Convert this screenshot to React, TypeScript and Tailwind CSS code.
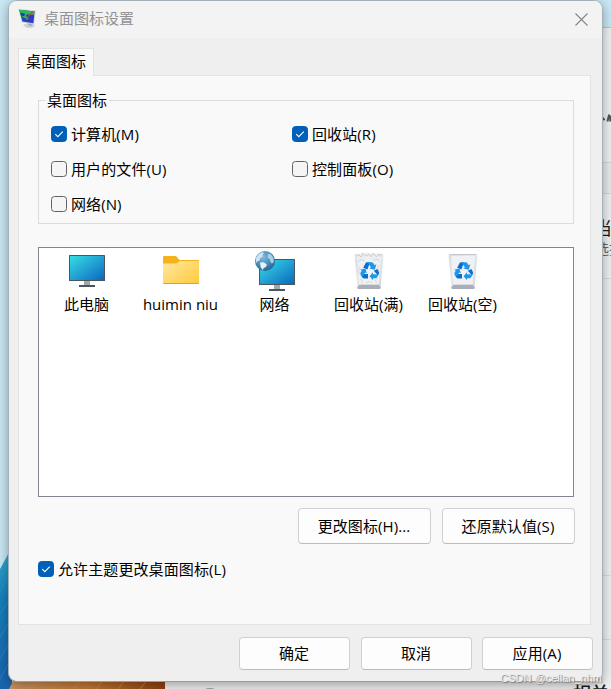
import { useState } from "react";
import type { ReactNode } from "react";

function Monitor({ x, y, fill }: { x: number; y: number; fill: string }) {
    return (
        <g transform={`translate(${x} ${y})`}>
            <rect x="15" y="26" width="6" height="4" fill="#a0a8ae" />
            <rect x="10" y="30" width="16" height="2" fill="#4a545c" />
            <rect width="36" height="26" rx="0.6" fill="#4b565e" />
            <rect x="1" y="1" width="34" height="24" fill={fill} />
        </g>
    );
}

function ScreenGradient({ id }: { id: string }) {
    return (
        <linearGradient id={id} x1="0" y1="0" x2="1" y2="1">
            <stop offset="0" stopColor="#35dde2" />
            <stop offset="0.5" stopColor="#22a2d4" />
            <stop offset="1" stopColor="#0b68bd" />
        </linearGradient>
    );
}

function ComputerIcon() {
    return (
        <svg width="48" height="48" viewBox="0 0 48 48">
            <defs><ScreenGradient id="pc" /></defs>
            <Monitor x={6} y={6} fill="url(#pc)" />
        </svg>
    );
}

function FolderIcon() {
    return (
        <svg width="48" height="48" viewBox="0 0 48 48">
            <defs>
                <linearGradient id="folder" x1="0" y1="0" x2="1" y2="1">
                    <stop offset="0" stopColor="#ffe8a0" />
                    <stop offset="1" stopColor="#ffca3a" />
                </linearGradient>
            </defs>
            <path d="M6 8.2Q6 7 7.2 7H18q1.2 0 2 1l2.4 3H41q1 0 1 1v10H6Z" fill="#f7b11b" />
            <path d="M6 14.5h12.5q1.5 0 2.5-1l1.5-1.4H41q1 0 1 1V34q0 1-1 1H7q-1 0-1-1Z" fill="url(#folder)" />
            <path d="M6 33.6q0 1.4 1 1.4h34q1 0 1-1.4q-.3.5-1 .5H7q-.7 0-1-.5Z" fill="#e5a11b" />
        </svg>
    );
}

function NetworkIcon() {
    return (
        <svg width="48" height="48" viewBox="0 0 48 48">
            <defs>
                <ScreenGradient id="net" />
                <radialGradient id="globe" cx="0.4" cy="0.3" r="0.75">
                    <stop offset="0" stopColor="#7ebce0" />
                    <stop offset="0.6" stopColor="#4489b8" />
                    <stop offset="1" stopColor="#255f8c" />
                </radialGradient>
            </defs>
            <Monitor x={8} y={10} fill="url(#net)" />
            <circle cx="14" cy="12" r="10" fill="url(#globe)" />
            <path d="M5 9q1.6-4 6-5.8l2 .8-1.5 2 .5 1.4-2.4 1.4-1 2.6-2.1 1L5 14Z" fill="#cfe3ee" />
            <path d="M9 13.6l3.4-.4 3.4 2-.8 2.6-2.4 1.2-.6 2-2.2-2.2Z" fill="#e9f3f7" />
            <path d="M17 4.6l3 1 2.4 3.5.4 3.6-1.8 2-1.6-2-.5-2.4-2.3-1.5Z" fill="#a9cfe3" />
        </svg>
    );
}

function BinIcon({ full = false }: { full?: boolean }) {
    const id = full ? "bin-full" : "bin-empty";
    return (
        <svg width="48" height="48" viewBox="0 0 48 48">
            <defs>
                <linearGradient id={id} x1="0" y1="0" x2="1" y2="1">
                    <stop offset="0" stopColor="#d6dbe1" />
                    <stop offset="0.4" stopColor="#e6e9ed" />
                    <stop offset="1" stopColor="#d3d8de" />
                </linearGradient>
            </defs>
            <path d="M9.6 6.4Q9.6 5 11 5h26q1.4 0 1.4 1.4L35.6 39q-.1 1-1.2 1H13.6q-1.1 0-1.2-1Z" fill={`url(#${id})`} />
            <path d="M11 5.5h26" stroke="#c3c8cf" strokeWidth="1" />
            <path d="M12 7h24l-2.4 28.6H14.4Z" fill="#eff1f4" />
            <path d="M14.4 35.8h19.2l2 2.4-.1 1q-.1.8-1.1.8H13.6q-1 0-1.1-.8l-.1-1Z" fill="#a9aeb7" />
            {full && (
                <>
                    <path d="M10 8l1.6-3.4 3.2.8 2-2.4 3 1.6 3-1 2.2 1.4L28.6 3l1.6 2 3.2-1.4 1.2 2L38 7l-2 4H12Z" fill="#eceeef" />
                    <path d="M11 7.5l2.6-1.8L16 8l2-3.4 3 2.4 3.2-2 1.6 2.6 3-3 2.4 3 3-2 1.8 2" stroke="#bfc4c8" strokeWidth="0.8" fill="none" />
                    <path d="M13 13l3-2.4 4 1.4M28 11.4l4-1 2.6 2.4" stroke="#cdd2d6" strokeWidth="0.9" fill="none" />
                    <path d="M13 17l2.4 2-2 3 1.6 3M34.4 16l-2.2 3 1.8 3M15 30l2.6 1.6-1 3M32.8 29l-2.4 2 1 3M21 33.6l3-1.2 3 1.8" stroke="#d2d6da" strokeWidth="0.9" fill="none" />
                </>
            )}
            <g>
                <path d="M18.2 18.8l2.2-4.4q.6-1.2 1.8-1.2H25l-2.6 7.2Z" fill="#0c6fd0" />
                <path d="M22.4 13.2h4.4q1 0 1.6 1l1.2 2 1.8-.9-1.6 5.5-5.6-1.2 1.8-1.2Z" fill="#1c97ea" />
                <path d="M28.8 21.8l3.6-1.9 1.4 2.9q.6 1.2 0 2.2l-.8 1.6Z" fill="#0c6fd0" />
                <path d="M33.6 25.4l-1.4 2.6q-.6 1.2-1.8 1.2H28v2l-3.4-4 3.4-4v2Z" fill="#1c97ea" />
                <path d="M23 29.6h-3.8q-1.2 0-1.8-1l-1.4-2.4.8-1.2H23Z" fill="#0c6fd0" />
                <path d="M16.2 27q-1.4-2-.6-3.4l1.2-1.8-1.6-1 5.2-1.4 1.4 5.2-1.6-1-2 3.4Z" fill="#1c97ea" />
            </g>
        </svg>
    );
}

function TitleIcon() {
    return (
        <svg width="20" height="22" viewBox="0 0 20 22" className="-mt-px shrink-0">
            <path d="M5 17q3-2 8-1.6l3.8 1.4q.4 2.6-3.8 3.2-5 .6-8-3Z" fill="#d0d3d5" />
            <path d="M9 14.6l5 .6.4 3-3.6-.2Z" fill="#abb0b4" />
            <path d="M.2 .8L17.8 2.4l-1.6 13.8L3.8 14.4Z" fill="#d3d7d9" />
            <path d="M1.2 1.8l15.4 1.6-1.2 11.8L4.4 13.4Z" fill="#2e3cc8" />
            <path d="M1.2 1.8l15.4 1.6-.6 3-5 .6-1.4 3-3 .2L2.6 7.4Z" fill="#2cbd48" />
            <path d="M2.2 4.4l4.8 1.4-.6 2.4-3.2-.4ZM8 7l3.6-1 .8 2-3 2Z" fill="#2236cc" />
            <path d="M15.4 3.2L10 8.6" stroke="#d8442c" strokeWidth="1.2" />
            <path d="M10.2 9.8l-2 1.8" stroke="#35b84a" strokeWidth="1.4" />
        </svg>
    );
}

function Checkbox({ label, initial = false }: { label: string; initial?: boolean }) {
    const [checked, setChecked] = useState(initial);

    return (
        <button
            type="button"
            role="checkbox"
            aria-checked={checked}
            onClick={() => setChecked(!checked)}
            className="flex h-[35px] items-center gap-1 tracking-[0.1px] whitespace-nowrap"
        >
            <span className={`flex size-4 items-center justify-center rounded-[3.5px] border ${checked ? "border-[#005fb8] bg-[#005fb8]" : "border-[#626262] bg-[#f5f5f5]"}`}>
                {checked && (
                    <svg width="10" height="10" viewBox="0 0 10 10" fill="none" className="shrink-0">
                        <path d="M1.3 5.2l2.5 2.5 5-5" stroke="#fff" strokeWidth="1.1" />
                    </svg>
                )}
            </span>
            <span>{label}</span>
        </button>
    );
}

function Button({ className, children }: { className: string; children: ReactNode }) {
    return (
        <button type="button" className={`flex items-center justify-center rounded-[4px] border border-[#d0d0d0] border-b-[#bcbcbc] bg-[#fdfdfd] pr-px tracking-[0.1px] whitespace-nowrap ${className}`}>
            {children}
        </button>
    );
}

const desktopIcons = [
    { label: "此电脑", icon: <ComputerIcon /> },
    { label: "huimin niu", icon: <FolderIcon /> },
    { label: "网络", icon: <NetworkIcon /> },
    { label: "回收站(满)", icon: <BinIcon full /> },
    { label: "回收站(空)", icon: <BinIcon /> },
];

// Wallpaper and the settings window that stick out from behind the dialog
function Backdrop() {
    return (
        <>
            <svg width="166" height="140" viewBox="0 0 166 140" className="absolute bottom-0 left-0">
                <defs>
                    <linearGradient id="petal" x1="0" y1="0" x2="0" y2="1">
                        <stop offset="0" stopColor="#35afd2" />
                        <stop offset="0.35" stopColor="#1680bd" />
                        <stop offset="1" stopColor="#1a63ad" />
                    </linearGradient>
                    <linearGradient id="orange" x1="0" y1="0" x2="1" y2="0">
                        <stop offset="0" stopColor="#c89563" />
                        <stop offset="0.5" stopColor="#c47735" />
                        <stop offset="1" stopColor="#8f3f10" />
                    </linearGradient>
                </defs>
                <path d="M0 20L12 -2V140H0Z" fill="url(#petal)" />
                <path d="M0 42l12-20M0 66l12-20M0 88l12-20M0 110l12-22M0 130l12-22" stroke="#3f9fd0" strokeWidth="0.7" opacity="0.6" />
                <path d="M9 140l5-10H166v10Z" fill="url(#orange)" />
                <path d="M30 140l8-10M52 140l8-10M74 140l8-10M96 140l8-10M118 140l8-10M140 140l8-10" stroke="#d99a58" strokeWidth="1" opacity="0.6" />
            </svg>
            <div className="absolute top-[27px] right-0 bottom-0 left-[165px] overflow-hidden border-t border-[#b5c3ca] bg-[#f0f0f0] text-[#1b1b1b]">
                <div className="absolute top-[134px] right-0 h-8 w-20 border-y border-[#d5d5d5] bg-[#e9e9e9]" />
                <div className="absolute top-[250px] right-0 h-[298px] w-20 border-y border-[#dcdcdc]" />
                <div className="absolute top-[611px] right-0 h-px w-20 bg-[#dcdcdc]" />
                <svg width="10" height="10" viewBox="0 0 10 10" className="absolute top-[85px] right-0 text-[#555]">
                    <path d="M1 4.5l2.6 2.4M6.4 8.6L8.2 1.6M9.2 8.6V2.4" stroke="currentColor" strokeWidth="2" />
                </svg>
                <div className="absolute top-[190px] left-[429px] text-[18px] leading-[20px] whitespace-nowrap">当前</div>
                <div className="absolute top-[212px] left-[430px] text-[14px] leading-[18px] whitespace-nowrap text-[#666]">选择</div>
                <div className="absolute top-[655px] left-[408px] text-[18px] leading-[20px] font-medium whitespace-nowrap">相关</div>
                <div className="absolute top-[660px] left-9 h-4 w-[18px] rounded-full bg-[#a3a9b6]" />
            </div>
        </>
    );
}

export default function App() {
    return (
        <div className="relative h-[689px] w-[611px] overflow-hidden bg-[#c9e7f4] font-['Open_Sans','Noto_Sans_CJK_SC',sans-serif] text-[15px] leading-5 text-black">
            <Backdrop />

            <div className="absolute top-0 left-2 flex h-[682px] w-[595px] flex-col overflow-hidden rounded-[9px] border border-[#a3b1b9] border-b-[#9c9c9c] bg-[#efefef] shadow-[0_3px_12px_rgba(0,0,0,0.35)]">
                <header className="flex h-[37px] shrink-0 items-center bg-[#f3f3f3] pr-[14px] pb-px pl-[9px]">
                    <TitleIcon />
                    <h1 className="-mt-0.5 ml-[6px] text-[#929292]">桌面图标设置</h1>
                    <button type="button" aria-label="关闭" className="ml-auto">
                        <svg width="13" height="13" viewBox="0 0 13 13" fill="none">
                            <path d="M.5.5l12 12M12.5.5l-12 12" stroke="#858585" strokeWidth="1.1" />
                        </svg>
                    </button>
                </header>

                <main className="px-[9px] pt-[10px]">
                    <div className="relative z-10 -mb-px flex h-7 w-[76px] items-center border border-b-0 border-[#e3e3e3] bg-[#f9f9f9] pb-[3px] pl-[7px] whitespace-nowrap">桌面图标</div>
                    <section className="h-[550px] w-[573px] border border-[#e3e3e3] bg-[#f9f9f9] pt-6 pl-[19px]">
                        <div className="h-[124px] w-[536px] border border-[#dcdcdc] pl-[6px]">
                            <div className="-mt-[11px] w-16 bg-[#f9f9f9] pl-[2px] whitespace-nowrap">桌面图标</div>
                            <div className="mt-[6px] ml-[6px] grid grid-cols-[241px_1fr]">
                                <Checkbox label="计算机(M)" initial />
                                <Checkbox label="回收站(R)" initial />
                                <Checkbox label="用户的文件(U)" />
                                <Checkbox label="控制面板(O)" />
                                <Checkbox label="网络(N)" />
                            </div>
                        </div>

                        <ul className="mt-[23px] flex h-[250px] w-[536px] border border-[#82858f] bg-white pt-px pl-px">
                            {desktopIcons.map(item => (
                                <li key={item.label} className="flex w-[94px] flex-col items-center">
                                    {item.icon}
                                    <span className="-mt-[3px] -ml-px whitespace-nowrap">{item.label}</span>
                                </li>
                            ))}
                        </ul>

                        <div className="mt-[11px] flex gap-[11px] pl-[260px]">
                            <Button className="h-9 w-[133px]">更改图标(H)...</Button>
                            <Button className="h-9 w-[133px]">还原默认值(S)</Button>
                        </div>

                        <div className="mt-[7px]">
                            <Checkbox label="允许主题更改桌面图标(L)" initial />
                        </div>
                    </section>
                </main>

                <footer className="mt-3 flex justify-end gap-[10px] pr-[9px]">
                    <Button className="mr-px h-[33px] w-[111px] pb-0.5">确定</Button>
                    <Button className="h-[33px] w-[111px] pb-0.5">取消</Button>
                    <Button className="h-[33px] w-[111px] pb-0.5">应用(A)</Button>
                </footer>
            </div>

            <div className="absolute right-[9px] bottom-[3px] font-['Liberation_Sans',sans-serif] text-[11px] leading-4 text-[#ececec] [text-shadow:1px_1px_1px_#777]">CSDN @cellan_nhm</div>
        </div>
    );
}
